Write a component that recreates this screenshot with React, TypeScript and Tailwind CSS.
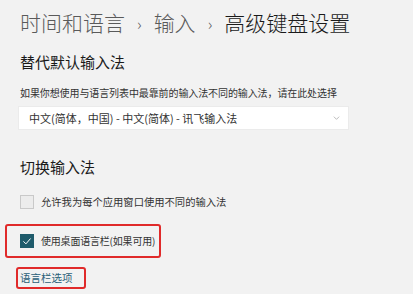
import React from 'react';

const font = { fontFamily: '"Noto Sans CJK SC", "Noto Sans", sans-serif' };

function Check() {
  return (
    <svg viewBox="0 0 14 14" className="h-[10px] w-[10px]" fill="none">
      <path d="M2 7.5 L5.5 11 L12 3.5" stroke="#ffffff" strokeWidth="1.4" />
    </svg>
  );
}

export default function App() {
  return (
    <div className="h-[294px] w-[413px] overflow-hidden bg-[#f2f2f2] text-[#1a1a1a]" style={font}>
      <div className="flex h-[45px] items-center pl-[20px] text-[21px] font-light leading-none">
        <span className="text-[#5a5a5a]">时间和语言</span>
        <span className="mx-[12px] text-[16px] text-[#5a5a5a]">›</span>
        <span className="text-[#5a5a5a]">输入</span>
        <span className="mx-[12px] text-[16px] text-[#5a5a5a]">›</span>
        <span className="text-[#1a1a1a]">高级键盘设置</span>
      </div>

      <div className="flex h-[33px] items-center pl-[20px] text-[15px] leading-none">替代默认输入法</div>

      <div className="flex h-[29px] items-center pl-[20px] text-[10px] leading-none tracking-[-0.1px] text-[#333]">
        如果你想使用与语言列表中最靠前的输入法不同的输入法，请在此处选择
      </div>

      <div className="ml-[19px] flex h-[22px] w-[329px] items-center justify-between bg-white pl-[10px] pr-[8px] text-[11px] leading-none text-[#333] shadow-[0_0_0_1px_#ebebeb]">
        <span>中文(简体，中国) - 中文(简体) - 讯飞输入法</span>
        <svg viewBox="0 0 10 6" className="h-[4px] w-[7px]" fill="none">
          <path d="M1 1 L5 5 L9 1" stroke="#9a9a9a" strokeWidth="1" />
        </svg>
      </div>

      <div className="mt-[23px] flex h-[29px] items-center pl-[20px] text-[15px] leading-none">切换输入法</div>

      <div className="mt-[9px] flex h-[24px] items-center gap-[7px] pl-[20px] text-[10.3px] leading-none text-[#333]">
        <div className="h-[14px] w-[14px] border border-[#c9c9c9] bg-[#ececec]" />
        <span>允许我为每个应用窗口使用不同的输入法</span>
      </div>

      <div className="ml-[5px] mt-[10px] flex h-[34px] w-[156px] items-center gap-[7px] rounded-[3px] border-2 border-[#e02a2a] pl-[13px] text-[10px] leading-none tracking-[-0.2px] text-[#333]">
        <div className="flex h-[14px] w-[14px] shrink-0 items-center justify-center bg-[#1f5b6b]">
          <Check />
        </div>
        <span className="whitespace-nowrap">使用桌面语言栏(如果可用)</span>
      </div>

      <div className="ml-[16px] mt-[9px] flex h-[22px] w-[70px] items-center rounded-[3px] border-2 border-[#e02a2a] pl-[2px] text-[10.5px] leading-none text-[#2a5f78]">
        语言栏选项
      </div>
    </div>
  );
}
